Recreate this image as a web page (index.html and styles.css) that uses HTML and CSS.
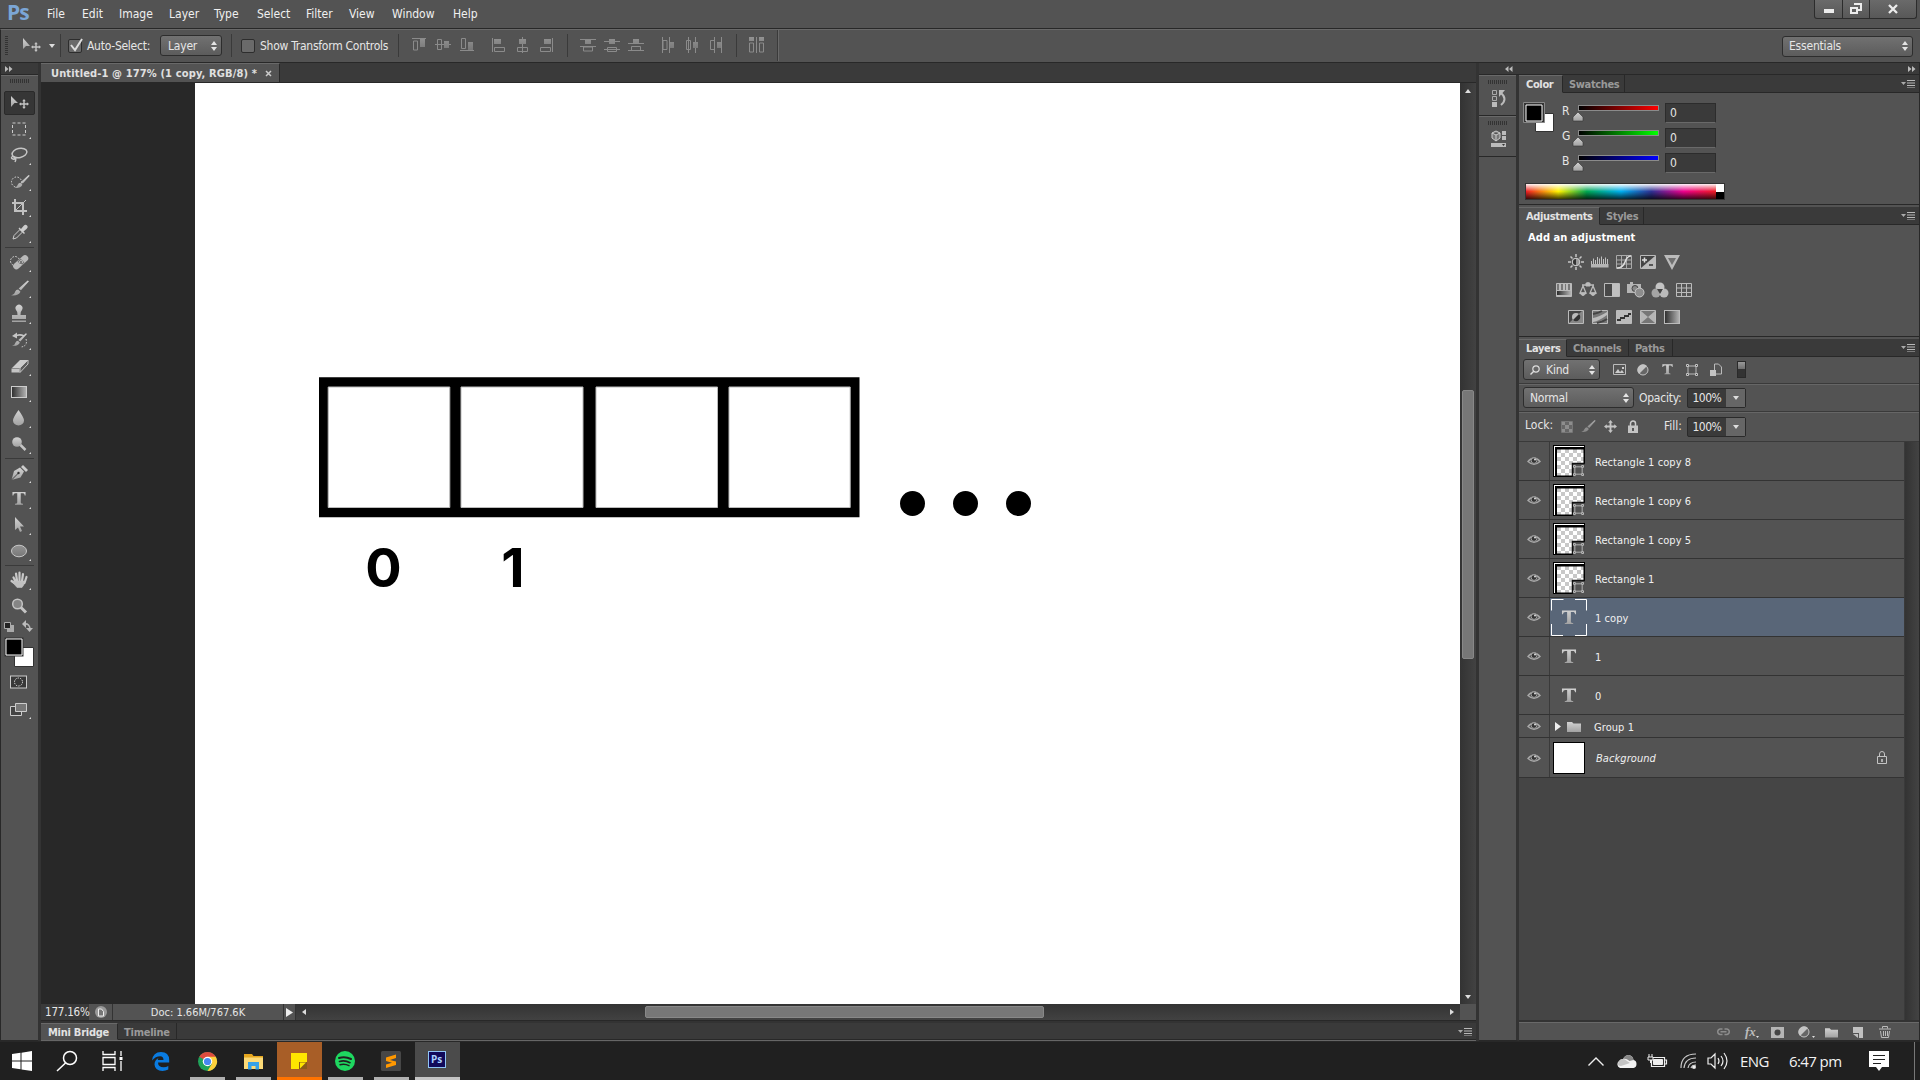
FILE: index.html
```html
<!DOCTYPE html>
<html lang="en">
<head>
<meta charset="utf-8">
<title>Photoshop</title>
<link rel="stylesheet" href="styles.css">
</head>
<body>
<svg class="defs" aria-hidden="true">
  <defs>
    <linearGradient id="metal" x1="0" y1="0" x2="0" y2="1"><stop offset="0" stop-color="#d2d2d2"/><stop offset="1" stop-color="#a2a2a2"/></linearGradient>
    <linearGradient id="fade" x1="0" x2="1"><stop offset="0" stop-color="#2c2c2c"/><stop offset="1" stop-color="#b5b5b5"/></linearGradient>
    <linearGradient id="dim" x1="0" y1="0" x2="0" y2="1"><stop offset="0" stop-color="#939393"/><stop offset="1" stop-color="#777"/></linearGradient>
    <pattern id="checker" width="8" height="8" patternUnits="userSpaceOnUse"><path fill="#fff" d="M0 0h8v8H0z"/><path fill="#c8c8c8" d="M0 0h4v4H0zM4 4h4v4H4z"/></pattern>
    <symbol id="eye" viewBox="0 0 14 12"><path d="M1 6.5Q7-.5 13 6.5Q7 12 1 6.5z" fill="none" stroke="#a8a8a8" stroke-width="1.4"/><circle cx="7" cy="5.6" r="2.8" fill="#333" stroke="#a0a0a0"/><circle cx="8" cy="4.6" r="1" fill="#ddd"/></symbol>
    <symbol id="updown" viewBox="0 0 6 10"><path d="M3 0L6 4H0zM3 10L6 6H0z" fill="#e4e4e4"/></symbol>
    <symbol id="panelmenu" viewBox="0 0 14 8"><path d="M0 2h5L2.500 5z" fill="#aaa"/><path d="M6 .5h8M6 3h8M6 5.500h8M6 8h8" stroke="#b8b8b8"/></symbol>
    <symbol id="shape" viewBox="0 0 12 12"><path d="M2 2h8v8H2z" fill="none" stroke="#bbb"/><path d="M.5.5h2v2h-2zM9.500.5h2v2h-2zM.5 9.500h2v2h-2zM9.500 9.500h2v2h-2z" fill="#444" stroke="#c4c4c4"/></symbol>
    <symbol id="thumb" viewBox="0 0 32 32"><path d="M0 0h32v32H0z" fill="#000"/><path d="M1 1h30v1H1zM1 1h1v30H1z" fill="#fff"/><rect x="4" y="4.500" width="26.500" height="26" fill="url(#checker)"/><path d="M19 18h13v14H19z" fill="#535353"/><path d="M32 18.500H19.500V32" fill="none" stroke="#111" stroke-width="1.500"/><svg x="20" y="20" width="11" height="11"><use href="#shape"/></svg></symbol>
    <symbol id="type" viewBox="0 0 16 16"><path d="M.5.500h15v4h-1c-.3-2-1-2.500-2.500-2.500h-2v10.500q0 1.300 2.500 1.500v1H3.500v-1Q6 13.800 6 12.500V2H4Q1.800 2 1.500 4.500h-1z" fill="url(#metal)"/></symbol>
    <symbol id="movex" viewBox="0 0 14 14"><path d="M7 0L9.500 3H8v3h3V4.500L14 7l-3 2.500V8H8v3h1.500L7 14l-2.500-3H6V8H3v1.500L0 7l3-2.500V6h3V3H4.500z" fill="#c4c4c4"/></symbol>
    <symbol id="brush" viewBox="0 0 20 18"><path d="M18.500 0L20 1l-9 10-2.500-2zM8 10l2.500 2.500Q8 17.500 0 16.500q4-1 4.500-4Q5.500 10 8 10z" fill="url(#metal)"/></symbol>
    <symbol id="folder" viewBox="0 0 14 11"><path d="M0 1h5l1.500 1.500H14V11H0z" fill="url(#metal)"/></symbol>
  </defs>
</svg>
<div class="screen">
  <header class="menubar">
    <div class="logo">Ps</div>
    <nav class="menu"><span class="w35">File</span><span class="w37">Edit</span><span class="w50">Image</span><span class="w45">Layer</span><span class="w43">Type</span><span class="w49">Select</span><span class="w43">Filter</span><span class="w43">View</span><span class="w61">Window</span><span>Help</span></nav>
    <div class="winbtns">
      <span class="winbtn wmin"><svg width="12" height="5"><path d="M1 0h10v4H1z" fill="#ececec"/></svg></span>
      <span class="winbtn wmax"><svg width="14" height="12"><path d="M5 1h7v6H8M2 5h6v5H2z" fill="none" stroke="#ececec" stroke-width="2"/></svg></span>
      <span class="winbtn wclose"><svg width="12" height="10"><path d="M2 1l8 8M10 1L2 9" stroke="#ececec" stroke-width="2.300"/></svg></span>
    </div>
  </header>
  <div class="options">
    <span class="grip-v"></span>
    <svg class="movetool" width="20" height="16"><path d="M1 0l7 8H4l-3 3z" fill="url(#metal)"/><svg x="9" y="4" width="10" height="10"><use href="#movex"/></svg></svg>
    <svg class="caret" width="6" height="4"><path d="M0 0h6L3 4z" fill="#ddd"/></svg>
    <span class="sep s1"></span>
    <span class="check c1"><svg width="15" height="16"><path d="M3 7l4 5L14 1" fill="none" stroke="#ddd" stroke-width="2"/></svg></span>
    <span class="label l1">Auto-Select:</span>
    <span class="select sel-layer">Layer<svg width="6" height="10"><use href="#updown"/></svg></span>
    <span class="sep s2"></span>
    <span class="check c2"></span>
    <span class="label l2">Show Transform Controls</span>
    <span class="sep s3"></span>
    <svg class="aligns" width="380" height="33" viewBox="400 29 380 33" fill="none" stroke="#8b8b8b">
      <path d="M412 38.500h14M413.500 41h4v9h-4zM437.500 39.500h4v10h-4zM435 44.500h16M460 50.500h14M461.500 38.500h4v10h-4z"/>
      <path d="M492.500 38v14M494.500 47.500h10v4h-10zM522.500 37v16M517.500 47.500h10v4h-10zM552.500 38v14M540.500 47.500h10v4h-10z"/>
      <path d="M580 39.500h16M580 46.500h16M583.500 47h9v4h-9zM604 41.500h16M604 49.500h16M607.500 47.500h9v4h-9zM628 43.500h16M628 50.500h16M631.500 46.500h9v4h-9z"/>
      <path d="M662.500 37v16M669.500 37v16M663 40.500h4v9h-4zM688.500 37v16M695.500 37v16M686.500 40.500h4v9h-4zM714.500 37v16M721.500 37v16M710.500 40.500h4v9h-4zM749.500 43h4v9h-4zM756.500 37v16M759.500 43h4v9h-4z"/>
      <path stroke="none" fill="url(#dim)" d="M420 39h5v8h-5zM444 41h5v7h-5zM468 42h5v8h-5zM494 39h7v5h-7zM519 39h7v5h-7zM544 39h7v5h-7zM585 40h6v4h-6zM609 39h6v5h-6zM633 39h6v4h-6zM670 42h4v6h-4zM693 42h5v6h-5zM717 42h4v6h-4zM749 37h5v4h-5zM759 37h5v4h-5z"/>
      <path stroke="#3a3a3a" d="M567.500 34v23M736.500 34v23M777.500 30v31"/><path stroke="#696969" d="M778.500 30v31"/>
    </svg>
    <span class="select workspace">Essentials<svg width="6" height="10"><use href="#updown"/></svg></span>
  </div>
  <main class="work">
    <aside class="tools">
      <div class="colhead"><svg width="8" height="6"><path d="M0 0l3.500 3L0 6zM4 0l3.500 3L4 6z" fill="#bbb"/></svg></div>
      <div class="toolbody">
        <span class="grip-h"></span>
        <div class="tool active"><svg viewBox="0 0 38 26"><path d="M10 6l7 7h-3.500L10 17z" fill="url(#metal)"/><svg x="18" y="9" width="10" height="10"><use href="#movex"/></svg></svg></div>
        <div class="tool more"><svg viewBox="0 0 38 26"><rect x="11.500" y="7" width="13" height="12" fill="none" stroke="#ccc" stroke-dasharray="3 2"/></svg></div>
        <div class="tool more"><svg viewBox="0 0 38 26" fill="none" stroke="#c5c5c5" stroke-width="1.500"><ellipse cx="18.500" cy="11" rx="7.500" ry="4.500" transform="rotate(-12 18.500 11)"/><path d="M12 14q-3 2 0 3t1-2q3 1 1 5"/></svg></div>
        <div class="tool more"><svg viewBox="0 0 38 26"><circle cx="15.500" cy="14" r="5" fill="none" stroke="#ddd" stroke-dasharray="1.500 1.500"/><svg x="13" y="7" width="16" height="14"><use href="#brush"/></svg></svg></div>
        <div class="tool more"><svg viewBox="0 0 38 26" fill="none" stroke="#c0c0c0" stroke-width="2"><path d="M14 5v12h12M11 9h11v12"/><path d="M14 17L25 6" stroke-width="1"/></svg></div>
        <div class="tool more"><svg viewBox="0 0 38 26"><path d="M12 19l1-3.500 6-6 2.500 2.500-6 6z" fill="#555" stroke="#ccc"/><path d="M17.500 8.500l1-1 1.500 1.500 2.500-3q2-2 3.500-.5t-.5 3.500l-3 2.500 1.500 1.500-1 1z" fill="#ccc"/></svg></div>
        <hr>
        <div class="tool more"><svg viewBox="0 0 38 26"><circle cx="14" cy="12" r="4.500" fill="none" stroke="#ddd" stroke-dasharray="1.500 1.500"/><rect x="10.500" y="10" width="18" height="6.500" rx="3.200" fill="#b9b9b9" transform="rotate(-42 19.500 13)"/><path d="M16.500 12.500l4 4 3-3-4-4z" fill="#777"/><path d="M18 13h1m2 0h1m-2-2v1m0 3v1" stroke="#eee"/></svg></div>
        <div class="tool more"><svg viewBox="0 0 38 26"><svg x="10" y="5" width="18" height="17"><use href="#brush"/></svg></svg></div>
        <div class="tool more"><svg viewBox="0 0 38 26"><path d="M15 9a3.500 3.500 0 1 1 6 0q-2 2-1.500 5H25v4H11v-4h5.500Q17 11 15 9zM11 19.500h14V21H11z" fill="url(#metal)"/></svg></div>
        <div class="tool more"><svg viewBox="0 0 38 26"><path d="M15 8q4-2 8 0v2q-4-2-8-.5z" fill="#c5c5c5"/><path d="M11 9l5-3.500v6z" fill="#c5c5c5"/><svg x="11" y="6" width="15" height="14"><use href="#brush"/></svg><path d="M25 12q2 7-5 8" fill="none" stroke="#ddd" stroke-dasharray="1.500 1.500"/></svg></div>
        <div class="tool more"><svg viewBox="0 0 38 26"><path d="M11 15l8-8h8l-8 8z" fill="#ccc"/><path d="M10.500 15.500h8v4h-8z" fill="#c4c4c4"/><path d="M19 15l8-8v4l-8 8.500z" fill="#5d5d5d" stroke="#c5c5c5"/></svg></div>
        <div class="tool more"><svg viewBox="0 0 38 26"><rect x="10.500" y="7.500" width="15" height="11" fill="url(#fade)" stroke="#ccc"/></svg></div>
        <div class="tool more"><svg viewBox="0 0 38 26"><path d="M17.500 5q5.500 7.500 5.500 10.500a5.500 5 0 0 1-11 0Q12 12.500 17.500 5z" fill="url(#metal)"/></svg></div>
        <div class="tool more"><svg viewBox="0 0 38 26"><circle cx="16" cy="11" r="4.800" fill="url(#metal)"/><path d="M19.500 14l5 5" stroke="#c4c4c4" stroke-width="2.500"/></svg></div>
        <hr>
        <div class="tool more"><svg viewBox="0 0 38 26"><path d="M10.500 20l2.500-9 6-3.500 4 4-3.500 6z" fill="url(#metal)"/><path d="M20 7l2-2 5 5-2 2z" fill="#ccc"/><path d="M10.500 20l7-7" stroke="#444"/><circle cx="17.500" cy="13" r="1.200" fill="#333"/></svg></div>
        <div class="tool more"><svg viewBox="0 0 38 26"><svg x="11" y="5" width="14" height="15"><use href="#type"/></svg></svg></div>
        <div class="tool more"><svg viewBox="0 0 38 26"><path d="M14 5v13l3-2.500 2 4.500 2-1-2-4.500h4z" fill="url(#metal)"/></svg></div>
        <div class="tool more"><svg viewBox="0 0 38 26"><ellipse cx="18" cy="13" rx="7.500" ry="5.800" fill="url(#dim)" stroke="#c8c8c8"/></svg></div>
        <hr>
        <div class="tool more"><svg viewBox="0 0 38 26" stroke="#c8c8c8" stroke-linecap="round"><path d="M12.500 10.500l3 6M15 6.500l1 7M18.500 5.500v8M22 7l-1 7M25.500 10l-2 6M10.500 14l3 2" stroke-width="2.200" fill="none"/><path d="M13 14h10.500q0 4-2.500 6.500h-5Q14 18 11 15z" fill="#c0c0c0" stroke-width=".5"/></svg></div>
        <div class="tool"><svg viewBox="0 0 38 26"><path d="M19.500 14l5.500 5.500" stroke="#c4c4c4" stroke-width="3"/><circle cx="16.500" cy="11" r="4.800" fill="#858585" stroke="#c4c4c4" stroke-width="1.500"/></svg></div>
        <svg class="minis" width="38" height="17"><path d="M6 6h7v7H6z" fill="#aaa"/><path d="M3.500 3.500h6v6h-6z" fill="#222" stroke="#aaa"/><path d="M23 5q6-1 6 6" fill="none" stroke="#b5b5b5" stroke-width="1.500"/><path d="M21 5l4-4v8zM25 9h7l-3.500 4z" fill="#bbb"/></svg>
        <svg class="fgbg" width="38" height="32"><path d="M13.500 11.500h19v19h-19z" fill="#fff" stroke="#333"/><path d="M3.500 1.500h19v19h-19z" fill="#333"/><path d="M5 3h16v16H5z" stroke="#fff"/></svg>
        <div class="tool"><svg viewBox="0 0 38 26"><rect x="9.500" y="8" width="16" height="12" fill="#383838" stroke="#ccc"/><circle cx="17.500" cy="14" r="4" fill="none" stroke="#eee" stroke-dasharray="1.300 1.200"/></svg></div>
        <div class="tool more screenmode"><svg viewBox="0 0 38 26"><path d="M9.500 10.500h11v9h-11z" fill="#444" stroke="#ccc"/><path d="M14.500 7.500h11v8h-11z" fill="#777" stroke="#ccc"/></svg></div>
      </div>
    </aside>
    <section class="document">
      <div class="doctabs"><div class="doctab"><span class="docname">Untitled-1 @ 177% (1 copy, RGB/8) *</span><svg width="7" height="7"><path d="M1 1l5 5M6 1L1 6" stroke="#ccc" stroke-width="1.500"/></svg></div></div>
      <div class="view">
        <div class="pasteboard"></div>
        <div class="canvas">
          <svg class="cells" width="560" height="160" viewBox="310 367 560 160">
            <path d="M319 377.300h540.500v140H319z"/>
            <path d="M328.200 387h121.600v120.500H328.200zM461 387h122v120.500H461zM596 387h121.500v120.500H596zM729 387h121.200v120.500H729z" fill="#fff" stroke="#bbb"/>
          </svg>
          <span class="dot d1"></span><span class="dot d2"></span><span class="dot d3"></span>
          <span class="num n0">0</span><span class="num n1">1</span>
        </div>
        <div class="vscroll"><svg width="6" height="4"><path d="M0 4h6L3 0z" fill="#ddd"/></svg><span class="vthumb"></span><svg width="6" height="4"><path d="M0 0h6L3 4z" fill="#ddd"/></svg></div>
      </div>
      <div class="status">
        <span class="zoomval">177.16%</span>
        <span class="share"><svg width="12" height="12"><circle cx="6" cy="6" r="6" fill="#999"/><path d="M3.500 3h3l2 2.500V10h-5z" fill="#777" stroke="#eee"/></svg></span>
        <span class="docsize">Doc: 1.66M/767.6K</span>
        <span class="play"><svg width="7" height="9"><path d="M0 0l7 4.500L0 9z" fill="#eee"/></svg></span>
        <div class="hscroll"><svg width="4" height="6"><path d="M4 0v6L0 3z" fill="#ddd"/></svg><span class="hthumb"></span><svg width="4" height="6"><path d="M0 0v6l4-3z" fill="#ddd"/></svg></div>
        <span class="corner"></span>
      </div>
      <div class="tabrow bridge"><span class="tab on t77">Mini Bridge</span><span class="tab t59">Timeline</span><span class="rest"><svg width="14" height="8"><use href="#panelmenu"/></svg></span></div>
    </section>
    <section class="right">
      <div class="righthead"><svg class="rh1" width="8" height="6"><path d="M3.500 0v6L0 3zM7.500 0v6L4 3z" fill="#bbb"/></svg><svg width="8" height="6"><path d="M0 0l3.500 3L0 6zM4 0l3.500 3L4 6z" fill="#bbb"/></svg></div>
      <div class="rightcols">
        <div class="dock">
          <div class="dockitem"><span class="grip-h"></span><svg width="16" height="18"><path d="M1.500 1.500h4v4h-4zM1.500 7.500h4v4h-4z" fill="none" stroke="#aaa"/><path d="M1 13h5v5H1zM8 1h6L8 8z" fill="#bbb"/><path d="M10 4q7 6 0 12" fill="none" stroke="#bbb" stroke-width="2"/></svg></div>
          <div class="dockitem"><span class="grip-h"></span><svg width="16" height="18"><path d="M5 1l4 2v5l-4 3-4-3V3zM1 3l4 2 4-2M5 5v6" fill="#777" stroke="#ccc"/><path d="M11 1h4v4h-4zM11 6h4v4h-4zM0 13h15v4H0z" fill="#bbb"/><path d="M11 14h3l-1.500 2z" fill="#333"/></svg></div>
        </div>
        <div class="panels">
          <div class="panel color">
            <div class="tabrow"><span class="tab on t44">Color</span><span class="tab t62">Swatches</span><span class="rest"><svg width="14" height="8"><use href="#panelmenu"/></svg></span></div>
            <div class="rgb">
              <svg class="swatch" width="32" height="32"><path d="M12.500 11.500h18v18h-18z" fill="#fff" stroke="#333"/><path d="M.5.500h21v20H.5z" fill="#333" stroke="#888"/><path d="M3 3h16v16H3z" stroke="#fff"/></svg>
              <div class="channels">
                <div class="channel"><span class="cname">R</span><span class="track red"><svg class="knob" width="12" height="9"><path d="M6 0l5 5v4H1V5z" fill="url(#metal)" stroke="#333" stroke-width=".6"/></svg></span><span class="field">0</span></div>
                <div class="channel"><span class="cname">G</span><span class="track green"><svg class="knob" width="12" height="9"><path d="M6 0l5 5v4H1V5z" fill="url(#metal)" stroke="#333" stroke-width=".6"/></svg></span><span class="field">0</span></div>
                <div class="channel"><span class="cname">B</span><span class="track blue"><svg class="knob" width="12" height="9"><path d="M6 0l5 5v4H1V5z" fill="url(#metal)" stroke="#333" stroke-width=".6"/></svg></span><span class="field">0</span></div>
              </div>
            </div>
            <div class="spectrum"><span class="hues"></span><span class="bw"></span></div>
          </div>
          <div class="panel adjust">
            <div class="tabrow"><span class="tab on t81">Adjustments</span><span class="tab t44">Styles</span><span class="rest"><svg width="14" height="8"><use href="#panelmenu"/></svg></span></div>
            <div class="adjtitle">Add an adjustment</div>
            <div class="icons r1">
              <svg viewBox="0 0 18 16"><circle cx="9" cy="8" r="3.800" fill="#999" stroke="#ccc"/><path d="M9 5v6a3 3 0 0 1 0-6" fill="#333"/><path d="M9 0v3M9 13v3M1 8h3M14 8h3M3.500 2.500l2 2M12.500 11.500l2 2M3.500 13.500l2-2M12.500 4.500l2-2" stroke="#c8c8c8" stroke-width="1.500"/></svg>
              <svg viewBox="0 0 18 16"><path d="M.5 7v5.500M2.500 4.500V11M4.500 6v5M6.500 3v8M8.500 4.500V11M10.500 2.500V11M12.500 5v6M14.500 3.500V11M16.500 5v7" stroke="#c0c0c0" fill="none"/><path d="M0 10h17.500v3.500H0z" fill="#b5b5b5"/></svg>
              <svg viewBox="0 0 18 16"><path d="M1.500 1.500h15v13h-15zM6.500 2v12M11.500 2v12M2 6h14M2 10h14" fill="none" stroke="#aaa"/><path d="M2 14q6 0 8-6t6-6" fill="none" stroke="#e0e0e0" stroke-width="1.500"/></svg>
              <svg viewBox="0 0 18 16"><path d="M1.500 1.500h15v13h-15z" fill="#444" stroke="#bbb"/><path d="M2 14L16 2v12z" fill="#bbb"/><path d="M3 6h5M5.500 3.500v5" stroke="#ddd" stroke-width="1.500"/><path d="M10 11h4" stroke="#333" stroke-width="1.500"/></svg>
              <svg viewBox="0 0 18 16"><path d="M1 1h16L9 16z" fill="#bbb"/><path d="M5 4h8l-4 7z" fill="#707070"/></svg>
            </div>
            <div class="icons r2">
              <svg viewBox="0 0 18 16"><path d="M1.500 1.500h15v13h-15z" fill="#bbb" stroke="#bbb"/><path d="M2 2h2v6H2zM6 2h2v6H6zM10 2h1v6h-1zM13 2h2v6h-2z" fill="#777"/><rect x="2" y="9" width="14" height="4" fill="url(#fade)"/></svg>
              <svg viewBox="0 0 18 16" fill="none" stroke="#bbb"><path d="M3 3h12M9 0v4M4 4l-3 7h6zM14 4l-3 7h6z" stroke-width="1.300"/><path d="M1 11q3 5 6 0zM11 11q3 5 6 0zM7 1h4v3H7z" fill="#bbb"/></svg>
              <svg viewBox="0 0 18 16"><path d="M1.500 1.500h15v13h-15z" fill="#484848" stroke="#bbb"/><path d="M9 2h7v12H9z" fill="#c0c0c0"/></svg>
              <svg viewBox="0 0 18 16"><path d="M0 2h3V0h3v2h8v9H0z" fill="#b5b5b5"/><circle cx="8" cy="6.500" r="3" fill="#888" stroke="#444"/><circle cx="12.500" cy="10.500" r="4.500" fill="#8d8d8d" stroke="#ccc"/></svg>
              <svg viewBox="0 0 18 16"><circle cx="9" cy="5" r="4.500" fill="#c4c4c4"/><circle cx="5" cy="11" r="4.500" fill="#a5a5a5"/><circle cx="13" cy="11" r="4.500" fill="#ccc" fill-opacity=".85"/><path d="M6 7h6l-3 5z" fill="#444"/></svg>
              <svg viewBox="0 0 18 16"><path d="M1.500 1.500h15v13h-15z" fill="#555" stroke="#bbb"/><path d="M6.500 2v12M11.500 2v12M2 6h14M2 10.500h14" stroke="#bbb"/></svg>
            </div>
            <div class="icons r3">
              <svg viewBox="0 0 18 16"><path d="M1.500 1.500h15v13h-15z" fill="#444" stroke="#bbb"/><path d="M2 14L15 2h1v12z" fill="#888"/><circle cx="9" cy="8" r="4" fill="#bbb"/><path d="M6 11l6-6A4 4 0 0 1 6 11z" fill="#333"/></svg>
              <svg viewBox="0 0 18 16"><path d="M1.500 1.500h15v13h-15z" fill="#777" stroke="#bbb"/><path d="M2 9q6-1 14-6v3q-8 6-14 7z" fill="#bbb"/><path d="M2 5q6-1 9-3M6 14q6-1 10-4" stroke="#444" stroke-width="2"/></svg>
              <svg viewBox="0 0 18 16"><path d="M1.500 1.500h15v13h-15z" fill="#bbb" stroke="#bbb"/><path d="M2 10h3V8h4V6h4V4h3v2h-2v2h-4v2H6v2H2z" fill="#333"/></svg>
              <svg viewBox="0 0 18 16"><path d="M1.500 1.500h15v13h-15z" fill="#767676" stroke="#bbb"/><path d="M2 2l7 6-7 6zM16 2L9 8l7 6z" fill="#b5b5b5"/></svg>
              <svg viewBox="0 0 18 16"><rect x="1.500" y="1.500" width="15" height="13" fill="url(#fade)" stroke="#bbb"/></svg>
            </div>
          </div>
          <div class="panel layers">
            <div class="tabrow"><span class="tab on t48">Layers</span><span class="tab t62">Channels</span><span class="tab t44">Paths</span><span class="rest"><svg width="14" height="8"><use href="#panelmenu"/></svg></span></div>
            <div class="lrow filter">
              <span class="select kind"><svg width="10" height="10"><circle cx="6" cy="4" r="3.200" fill="none" stroke="#ddd" stroke-width="1.200"/><path d="M4 6L.5 9.500" stroke="#ddd" stroke-width="1.500"/></svg><span class="grow">Kind</span><svg width="6" height="10"><use href="#updown"/></svg></span>
              <svg class="f1" width="13" height="12"><path d="M.5.500h12v10H.5z" fill="#555" stroke="#bbb"/><path d="M2 9l3-4 2 3 2-2 2 3z" fill="#ccc"/><path d="M9 3h2v2H9z" fill="#ccc"/></svg>
              <svg class="f2" width="12" height="12"><circle cx="6" cy="6" r="5" fill="#666" stroke="#c4c4c4"/><path d="M2 10L10 2A5 5 0 0 0 2 10z" fill="#c4c4c4"/></svg>
              <svg class="f3" width="11" height="11"><use href="#type"/></svg>
              <svg class="f4" width="12" height="12"><use href="#shape"/></svg>
              <svg class="f5" width="12" height="13"><path d="M4.500 1h4l3 3v7h-7z" fill="#555" stroke="#bbb"/><path d="M0 7h6v6H0z" fill="#c4c4c4"/></svg>
              <span class="toggle"></span>
            </div>
            <div class="lrow blend"><span class="select mode">Normal<svg width="6" height="10"><use href="#updown"/></svg></span><span class="optext">Opacity:</span><span class="pct"><span class="pv">100%</span><span class="pd"><svg width="6" height="4"><path d="M0 0h6L3 4z" fill="#ddd"/></svg></span></span></div>
            <div class="lrow lock"><span class="locktext">Lock:</span>
              <svg class="k1" width="12" height="13"><path d="M.5 1.500h11v11H.5z" fill="#666" stroke="#777"/><path d="M1 2h3v3H1zM8 2h3v3H8zM4 5h4v4H4zM1 9h3v3H1zM8 9h3v3H8z" fill="#8d8d8d"/></svg>
              <svg class="k2" width="15" height="13" opacity=".65"><use href="#brush"/></svg>
              <svg class="k3" width="13" height="13"><use href="#movex"/></svg>
              <svg class="k4" width="10" height="13"><path d="M2.500 6V3.500a2.500 2.500 0 0 1 5 0V6" fill="none" stroke="#ccc" stroke-width="1.500"/><path d="M0 5.500h10V13H0z" fill="#c4c4c4"/><path d="M5 8v3" stroke="#333" stroke-width="1.500"/></svg>
              <span class="filltext">Fill:</span><span class="pct"><span class="pv">100%</span><span class="pd"><svg width="6" height="4"><path d="M0 0h6L3 4z" fill="#ddd"/></svg></span></span></div>
            <div class="listwrap">
              <div class="list">
                <div class="layer"><span class="vis"><svg width="14" height="12"><use href="#eye"/></svg></span><span class="body"><svg class="th" width="32" height="32"><use href="#thumb"/></svg><span class="lname">Rectangle 1 copy 8</span></span></div>
                <div class="layer"><span class="vis"><svg width="14" height="12"><use href="#eye"/></svg></span><span class="body"><svg class="th" width="32" height="32"><use href="#thumb"/></svg><span class="lname">Rectangle 1 copy 6</span></span></div>
                <div class="layer"><span class="vis"><svg width="14" height="12"><use href="#eye"/></svg></span><span class="body"><svg class="th" width="32" height="32"><use href="#thumb"/></svg><span class="lname">Rectangle 1 copy 5</span></span></div>
                <div class="layer"><span class="vis"><svg width="14" height="12"><use href="#eye"/></svg></span><span class="body"><svg class="th" width="32" height="32"><use href="#thumb"/></svg><span class="lname">Rectangle 1</span></span></div>
                <div class="layer"><span class="vis"><svg width="14" height="12"><use href="#eye"/></svg></span><span class="body selected"><svg class="tt" width="36" height="37"><path d="M.5 11.500V.500h12M24 .5h11.500v11M35.500 25v11.500H24M12 36.500H.5V25" fill="none" stroke="#fff"/><svg x="10" y="11" width="16" height="15"><use href="#type"/></svg></svg><span class="lname">1 copy</span></span></div>
                <div class="layer"><span class="vis"><svg width="14" height="12"><use href="#eye"/></svg></span><span class="body"><svg class="tt" width="36" height="37"><svg x="10" y="11" width="16" height="15"><use href="#type"/></svg></svg><span class="lname">1</span></span></div>
                <div class="layer"><span class="vis"><svg width="14" height="12"><use href="#eye"/></svg></span><span class="body"><svg class="tt" width="36" height="37"><svg x="10" y="11" width="16" height="15"><use href="#type"/></svg></svg><span class="lname">0</span></span></div>
                <div class="layer group"><span class="vis"><svg width="14" height="12"><use href="#eye"/></svg></span><span class="body"><svg class="tri" width="7" height="9"><path d="M0 0l6 4.500L0 9z" fill="#eee"/></svg><svg class="fold" width="14" height="11"><use href="#folder"/></svg><span class="lname">Group 1</span></span></div>
                <div class="layer back"><span class="vis"><svg width="14" height="12"><use href="#eye"/></svg></span><span class="body"><span class="white"></span><i class="lname">Background</i><svg class="lk" width="10" height="13"><path d="M2.500 6V3a2.500 2.500 0 0 1 5 0v3M.500 5.500h9v7h-9z" fill="none" stroke="#c4c4c4"/><path d="M5 8v3" stroke="#ccc" stroke-width="1.500"/></svg></span></div>
              </div>
              <div class="lscroll"></div>
            </div>
            <div class="lfoot">
              <svg width="15" height="12" fill="none" stroke="#8d8d8d" stroke-width="1.500"><path d="M6.500 8.500H4a2.800 2.800 0 0 1 0-5.500h2.500M8.500 3H11a2.800 2.800 0 0 1 0 5.500H8.500M4.500 5.800h6"/></svg>
              <span class="fx">fx<svg width="3" height="3"><path d="M0 0h3L1.500 2z" fill="#ddd"/></svg></span>
              <svg class="g1" width="13" height="11"><path d="M0 0h13v11H0z" fill="#b5b5b5"/><circle cx="6.500" cy="5.500" r="3" fill="#444"/></svg>
              <svg class="g2" width="17" height="12"><circle cx="6" cy="6" r="5" fill="#666" stroke="#c4c4c4"/><path d="M2 10L10 2A5 5 0 0 0 2 10z" fill="#c4c4c4"/><path d="M14 10h3l-1.500 2z" fill="#ddd"/></svg>
              <svg class="g3" width="13" height="11"><use href="#folder"/></svg>
              <svg class="g4" width="11" height="11"><path d="M0 0h10v11H6V6H0zM0 7h5v4z" fill="#c0c0c0"/></svg>
              <svg class="g5" width="12" height="12" fill="none" stroke="#bbb"><path d="M0 3h12M3.500 2.500V.5h5v2M1.500 5l1 6.500h7l1-6.500M4.500 5v5M6.500 5v5M8.500 5v5"/></svg>
            </div>
          </div>
        </div>
      </div>
    </section>
  </main>
  <footer class="taskbar">
    <div class="tb start"><svg width="20" height="20"><path d="M0 3l8.500-1.200V9.500H0zM9.500 1.700L20 0v9.500H9.500zM0 10.500h8.500v7.700L0 17zM9.500 10.500H20V20l-10.500-1.600z" fill="#fff"/></svg></div>
    <div class="tb search"><svg width="22" height="22" fill="none" stroke="#fff" stroke-width="1.500"><circle cx="14" cy="8" r="6.500"/><path d="M9.500 13L1 21"/></svg></div>
    <div class="tb tview"><svg width="21" height="20" fill="none" stroke="#fff" stroke-width="1.300"><path d="M1 0v3.500h12V0M1 6.500h12v7H1zM1 20v-3.500h12V20M19 0v5M19 10v10"/><path d="M17.500 6h3v3h-3z" fill="#fff" stroke="none"/></svg></div>
    <div class="tb"><svg width="18" height="19" viewBox="0 0 18 19"><path d="M0 8.500Q1 0 9 0q8 0 8.200 8v2.500H6q.2 4.800 5.500 4.800 2.800 0 4.800-1.200v3.500Q13.500 19 10.500 19 3 18.800 2.500 12.500 2.500 8 6.500 6 5.800 7 5.800 8h5.700q0-3.800-3.300-3.800Q3.500 4.200 0 8.500z" fill="#0a7be0"/></svg></div>
    <div class="tb run"><svg width="19" height="19" viewBox="0 0 20 20"><circle cx="10" cy="10" r="10" fill="#1fa35a"/><path d="M10 10L1.300 5A10 10 0 0 1 18.700 5z" fill="#dd4b3e"/><path d="M10 5h8.700A10 10 0 0 1 10 20l4.500-7.500z" fill="#fdd03b"/><circle cx="10" cy="10" r="5" fill="#fff"/><circle cx="10" cy="10" r="3.800" fill="#4688f1"/></svg></div>
    <div class="tb run"><svg width="19" height="17"><path d="M0 1h8l1.500 2H19v13H0z" fill="#e6a71f"/><path d="M0 4.500h19V16H0z" fill="#fcda77"/><path d="M4 9h11v7.500h-3.500V13h-4v3.500H4z" fill="#35a1e8"/></svg></div>
    <div class="tb run sticky"><svg width="16" height="16"><path d="M0 0h16v9l-7 7H0z" fill="#ffe600"/><path d="M8 9h8v7H8z" fill="#8b5a1a"/><path d="M9 9.500h6l-6 6z" fill="#ffe600"/></svg></div>
    <div class="tb run"><svg width="20" height="20" fill="none" stroke="#202020" stroke-linecap="round"><circle cx="10" cy="10" r="10" fill="#1ed760" stroke="none"/><path d="M4 7q6-2 12 1" stroke-width="2"/><path d="M4.500 10.500q5.500-1.500 10.500 1.200" stroke-width="1.700"/><path d="M5 13.700q5-1.200 9 1" stroke-width="1.400"/></svg></div>
    <div class="tb run sub"><svg width="20" height="20"><rect width="20" height="20" rx="1.500" fill="#474747"/><path d="M5 6.500l10-3v3.500l-6 2 6 1.500v3.500l-10 3v-3.500l6-1.800-6-1.700z" fill="#ff9800"/></svg></div>
    <div class="tb run ps"><span class="pslogo">Ps</span></div>
    <div class="tray">
      <svg class="y1" width="16" height="9"><path d="M.5 8.500L8 1l7.500 7.500" fill="none" stroke="#eee" stroke-width="1.400"/></svg>
      <svg class="y2" width="21" height="13"><path d="M4 13a4 4 0 0 1-1-7q1-2 4-2Q9 0 13 0q4 1 4.500 5 3 .5 3 4t-3 4z" fill="#f2f2f2"/><path d="M7 4Q9 0 13 0q4 1 4.500 5l-4 1Q10 3 7 4z" fill="#888"/><path d="M3 6q4-4 8 0l3 2-9 3q-5 0-2-5z" fill="#c4c4c4"/></svg>
      <svg class="y3" width="20" height="15" fill="none" stroke="#eee"><path d="M4.500 3.500h13v9h-13zM18 6h1.500v4H18" stroke-width="1.200"/><path d="M6.500 5.500h9v5h-9z" fill="#eee"/><path d="M1 3h5v3H1zM2 0v3M5 0v3M3.500 6v3" fill="#222"/></svg>
      <svg class="y4" width="17" height="16" fill="none" stroke="#ccc" stroke-width="1.200"><path d="M1 15Q1 1 16 1M4 15Q5 5 16 5M8 15q1-6 8-6M11 15q1-3 5-3"/><circle cx="14" cy="14" r="1.500" fill="#fff"/></svg>
      <svg class="y5" width="21" height="18" fill="none" stroke="#eee" stroke-width="1.200"><path d="M1 6h3l4-4v14l-4-4H1zM11 6q2 3 0 6M14 4q4 5 0 10M17 1q6 8 0 16"/></svg>
      <span class="lang">ENG</span><span class="clock">6:47 pm</span>
      <svg class="y6" width="20" height="20"><path d="M0 0h20v16h-7l-3 4-3-4H0z" fill="#fff"/><path d="M4 4.500h12M4 8.500h12M4 12.500h8" stroke="#222"/></svg>
      <span class="desk"></span>
    </div>
  </footer>
</div>
</body>
</html>
```
FILE: styles.css
```css
* { box-sizing: border-box; }
body { margin: 0; background: #535353; color: #e6e6e6; font: 11px "DejaVu Sans Condensed", "DejaVu Sans", sans-serif; font-stretch: condensed; overflow: hidden; }
svg { display: block; flex: none; overflow: visible; }
.defs { width: 0; height: 0; position: absolute; }
.screen { width: 1920px; height: 1080px; display: flex; flex-direction: column; background: #535353; }
span { white-space: nowrap; }

/* menu bar */
.menubar { height: 29px; flex: none; display: flex; border-bottom: 1px solid #282828; }
.logo { width: 47px; padding-left: 7px; font: bold 21px/25px "Open Sans", sans-serif; color: #7ba6d6; letter-spacing: -1px; }
.menu { display: flex; font-size: 12px; line-height: 28px; flex: 1; color: #f0f0f0; }
.w35 { width: 35px; } .w37 { width: 37px; } .w50 { width: 50px; } .w45 { width: 45px; } .w43 { width: 43px; } .w49 { width: 49px; } .w61 { width: 61px; }
.winbtns { display: flex; height: 19px; margin-right: 3px; border: 1px solid #2c2c2c; border-top: 0; border-radius: 0 0 3px 3px; background: linear-gradient(#6a6a6a, #585858); }
.winbtn { display: flex; justify-content: center; align-items: center; }
.winbtn + .winbtn { border-left: 1px solid #2c2c2c; }
.wmin { width: 27px; padding-top: 5px; } .wmax { width: 27px; } .wclose { width: 47px; }

/* options bar */
.options { height: 34px; flex: none; display: flex; align-items: center; border-top: 1px solid #696969; border-bottom: 1px solid #282828; border-left: 1px solid #282828; font-size: 12px; padding-bottom: 1px; }
.grip-v { width: 3px; height: 20px; margin-left: 4px; background: repeating-linear-gradient(#333 0 1px, transparent 1px 2px); }
.movetool { margin-left: 14px; }
.caret { margin-left: 7px; }
.sep { width: 1px; height: 23px; background: #3a3a3a; flex: none; }
.s1 { margin-left: 5px; }
.check { width: 14px; height: 14px; border: 1px solid #2d2d2d; border-radius: 2px; background: #6a6a6a; flex: none; }
.check svg { margin: -2px 0 0 -1px; }
.c1 { margin-left: 7px; } .c2 { margin-left: 9px; }
.label { letter-spacing: -.26px; }
.l1 { width: 78px; padding-left: 5px; } .l2 { width: 143px; padding-left: 5px; }
.select { display: flex; align-items: center; justify-content: space-between; height: 21px; padding: 0 4px 0 7px; border: 1px solid #2d2d2d; border-radius: 3px; background: linear-gradient(#717171, #5c5c5c); flex: none; letter-spacing: -.2px; }
.sel-layer { width: 62px; } .s2 { margin-left: 9px; } .s3 { margin-left: 0; }
.aligns { margin-left: 1px; }
.workspace { width: 131px; margin: 1px 7px 0 auto; padding-left: 6px; }

.work { flex: 1; min-height: 0; display: flex; }

/* tool column */
.tools { width: 41px; flex: none; display: flex; flex-direction: column; border-left: 1px solid #282828; border-right: 3px solid #333; }
.colhead { height: 12px; background: #3a3a3a; padding: 3px 4px; border-bottom: 1px solid #282828; }
.toolbody { flex: 1; border-top: 1px solid #696969; border-bottom: 1px solid #282828; display: flex; flex-direction: column; }
.grip-h { display: block; width: 20px; height: 4px; margin: 3px 0 8px 9px; flex: none; background: repeating-linear-gradient(90deg, #333 0 1px, transparent 1px 2px); }
.toolbody .grip-h { margin-bottom: 7px; }
.tool { height: 26px; width: 37px; flex: none; position: relative; }
.tool > svg { width: 38px; height: 26px; }
.active { height: 24px; margin: 1px 3px; width: 31px; background: #363636; border: 1px solid #2a2a2a; border-radius: 2px; }
.active > svg { margin: -2px 0 0 -4px; }
.more::after { content: ""; position: absolute; right: 7px; bottom: 3px; border: 1.500px solid #ddd; border-left-color: transparent; border-top-color: transparent; }
.tools hr { width: 29px; height: 1px; border: 0; background: #3a3a3a; margin: 1px 0 1px 4px; flex: none; }
.screenmode { margin-top: 2px; }

/* document */
.document { width: 1438px; flex: none; display: flex; flex-direction: column; border-right: 3px solid #333; }
.doctabs { height: 20px; flex: none; display: flex; background: #3a3a3a; border-bottom: 1px solid #282828; }
.doctab { width: 239px; display: flex; align-items: center; padding: 0 7px 0 10px; justify-content: space-between; background: #535353; border-top: 1px solid #696969; border-right: 1px solid #282828; color: #e0e0e0; font-weight: bold; }
.docname { letter-spacing: .14px; padding-top: 1px; }
.view { flex: 1; display: flex; min-height: 0; }
.pasteboard { width: 154px; background: #282828; }
.canvas { width: 1265px; background: #fff; position: relative; }
.cells { position: absolute; left: 115px; top: 284px; }
.dot { position: absolute; top: 407.500px; width: 25px; height: 25px; border-radius: 50%; background: #000; }
.d1 { left: 705px; } .d2 { left: 758px; } .d3 { left: 811px; }
.num { position: absolute; top: 452.500px; width: 60px; text-align: center; color: #000; font: bold 54px/64px Inter, sans-serif; }
.n0 { left: 158.500px; } .n1 { left: 288px; }
.vscroll { width: 16px; display: flex; flex-direction: column; align-items: center; padding: 6px 0 5px; background: linear-gradient(90deg, #333, #424242); }
.vthumb { width: 12px; height: 269px; margin: 297px 0 auto; border-radius: 2px; background: #777; border: 1px solid #888; }
.status { height: 17px; flex: none; display: flex; line-height: 17px; background: #535353; border-bottom: 1px solid #282828; }
.zoomval { width: 48px; padding-left: 4px; background: #3a3a3a; font-size: 11.500px; letter-spacing: -.2px; }
.share { width: 24px; padding: 2px 0 0 6px; border-right: 1px solid #333; }
.docsize { width: 171px; text-align: center; border-right: 1px solid #333; }
.play { width: 11px; padding: 4px 0 0 2px; }
.hscroll { flex: 1; display: flex; align-items: center; background: linear-gradient(#333, #424242); padding: 0 6px; border-left: 1px solid #333; }
.hthumb { width: 399px; height: 12px; margin: 0 auto 0 339px; border-radius: 2px; background: #777; border: 1px solid #888; }
.corner { width: 16px; }

/* tab strips */
.tabrow { display: flex; height: 18px; flex: none; background: #3a3a3a; font-weight: bold; line-height: 18px; letter-spacing: -.35px; }
.tab { border-right: 1px solid #282828; border-bottom: 1px solid #282828; color: #999; padding: 1px 0 0 6px; flex: none; line-height: 17px; }
.tab.on { background: #535353; color: #e2e2e2; border-bottom-color: #535353; border-top: 1px solid #696969; padding: 0 0 0 7px; }
.rest { flex: 1; display: flex; justify-content: flex-end; padding: 5px 4px; border-bottom: 1px solid #282828; }
.t77 { width: 77px; } .t59 { width: 59px; } .t44 { width: 44px; } .t62 { width: 62px; } .t81 { width: 81px; } .t48 { width: 48px; }
.bridge { height: 20px; border-top: 2px solid #333; border-bottom: 1px solid #666; letter-spacing: -.25px; }

/* right side */
.right { flex: 1; display: flex; flex-direction: column; border-right: 1px solid #282828; min-width: 0; }
.righthead { height: 12px; flex: none; display: flex; justify-content: space-between; padding: 3px 3px 0 26px; background: #3a3a3a; border-bottom: 1px solid #282828; }
.rightcols { flex: 1; display: flex; min-height: 0; }
.dock { width: 40px; flex: none; border-right: 3px solid #333; border-bottom: 1px solid #282828; }
.dockitem { height: 41px; border-top: 1px solid #696969; border-bottom: 1px solid #282828; padding-top: 1px; }
.dockitem svg { margin: -3px 0 0 12px; }
.panels { flex: 1; display: flex; flex-direction: column; min-width: 0; }
.panel { border-bottom: 1px solid #282828; flex: none; }
.color { height: 130px; }
.rgb { display: flex; padding-left: 4px; height: 90px; }
.swatch { margin-top: 9px; }
.channels { padding: 10px 0 0 7px; }
.channel { display: flex; height: 25px; font-size: 12px; align-items: flex-start; }
.cname { width: 16px; line-height: 17px; }
.track { width: 81px; height: 6px; border: 1px solid #8b8b8b; margin-top: 2px; position: relative; }
.knob { position: absolute; left: -7px; top: 6px; }
.red { background: linear-gradient(90deg, #000, #f00); }
.green { background: linear-gradient(90deg, #000, #0f0); }
.blue { background: linear-gradient(90deg, #000, #00f); }
.field { width: 51px; height: 20px; margin-left: 6px; padding-left: 4px; line-height: 19px; background: #3a3a3a; border: 1px solid #2c2c2c; border-bottom-color: #696969; }
.spectrum { width: 200px; height: 17px; margin: 0 0 0 6px; display: flex; border: 1px solid #333; }
.hues { flex: 1; background: linear-gradient(rgba(255,255,255,.95), rgba(255,255,255,0) 50%, rgba(0,0,0,0) 50%, rgba(0,0,0,.75)), linear-gradient(90deg, #ed1c24, #fff200 17%, #00a651 32%, #00aeef 50%, #2e3192 66%, #ec008c 83%, #ed1c24); }
.bw { width: 8px; background: linear-gradient(#fff 50%, #000 50%); }
.adjust { margin-top: 2px; height: 130px; }
.adjtitle { padding: 5px 0 0 9px; font-weight: bold; line-height: 16px; font-size: 11px; color: #fff; letter-spacing: .08px; }
.icons { display: flex; gap: 6px; }
.icons svg { width: 18px; height: 16px; }
.r1 { padding: 8px 0 0 47.500px; } .r2 { padding: 12px 0 0 36px; } .r3 { padding: 11px 0 0 48px; }
.layers { margin-top: 2px; flex: 1; display: flex; flex-direction: column; min-height: 0; }
.lrow { display: flex; align-items: center; height: 28px; flex: none; border-bottom: 1px solid #3a3a3a; border-top: 1px solid #666; font-size: 12px; padding-bottom: 1px; }
.lrow.filter { height: 27px; border-top: 0; }
.lrow.lock { height: 30px; }
.kind { width: 77px; margin-left: 4px; gap: 6px; padding-left: 6px; font-size: 12px; }
.grow { flex: 1; }
.f1 { margin-left: 13px; } .f2 { margin-left: 11px; } .f3 { margin-left: 13px; } .f4 { margin-left: 13px; } .f5 { margin-left: 12px; }
.toggle { width: 9px; height: 17px; margin-left: 15px; border: 1px solid #2a2a2a; background: linear-gradient(#999, #707070 45%, #333 45%); }
.mode { width: 111px; margin-left: 4px; padding-left: 6px; }
.optext { width: 48px; margin-left: 5px; letter-spacing: -.25px; }
.pct { display: flex; width: 59px; height: 20px; border: 1px solid #2a2a2a; background: #3a3a3a; border-radius: 2px; letter-spacing: -.5px; }
.pv { width: 38px; line-height: 18px; padding-left: 4.500px; }
.pd { flex: 1; display: flex; justify-content: center; align-items: center; background: #666; }
.locktext { width: 42px; padding-left: 6px; margin-top: -4px; }
.k2 { margin-left: 8px; } .k3 { margin-left: 8px; } .k4 { margin-left: 11px; }
.filltext { width: 23px; margin-left: 26px; margin-top: -2px; }
.listwrap { flex: 1; display: flex; background: #454545; min-height: 0; }
.list { width: 385px; }
.layer { display: flex; height: 39px; border-bottom: 1px solid #333; background: #535353; color: #f0f0f0; }
.vis { width: 31px; border-right: 1px solid #3a3a3a; display: flex; align-items: center; padding-left: 8px; }
.body { flex: 1; display: flex; align-items: center; }
.lname { padding-top: 2px; letter-spacing: .07px; }
.selected { background: #596678; }
.th { margin: 0 10px 0 3px; } .tt { margin: 0 8px 0 1px; }
.group { height: 23px; }
.tri { margin-left: 5px; } .fold { margin: 0 13px 0 5px; }
.back { height: 40px; }
.white { width: 32px; height: 32px; margin: 0 11px 0 3px; border: 1px solid #000; background: #fff; }
.lk { margin-left: auto; margin-right: 17px; }
.lscroll { flex: 1; background: linear-gradient(90deg, #333, #434343); border-left: 1px solid #3a3a3a; }
.lfoot { height: 18px; flex: none; display: flex; align-items: center; padding: 1px 0 0 197px; border-top: 1px solid #696969; box-shadow: 0 -2px #333; }
.fx { display: flex; align-items: flex-end; width: 20px; margin-left: 14px; font: italic bold 13px/14px "Liberation Serif", serif; color: #bbb; }
.g1 { margin-left: 6px; } .g2 { margin-left: 14px; } .g3 { margin-left: 10px; } .g4 { margin-left: 15px; } .g5 { margin-left: 15px; }

/* taskbar */
.taskbar { height: 39px; flex: none; display: flex; background: #202020; border-top: 1px solid #282828; }
.tb { width: 46px; display: flex; align-items: center; justify-content: center; flex: none; }
.start { width: 44px; } .search { width: 46px; } .tview { width: 48px; padding-right: 3px; }
.run { background: linear-gradient(#b0b0b0, #b0b0b0) 50% 100% / 35px 3px no-repeat; }
.sticky { background: linear-gradient(#ff7300, #ff7300) 50% 100% / 45px 3px no-repeat, #a85e27; border-left: 1px solid #202020; padding-right: 1px; }
.ps { background: linear-gradient(#c4c4c4, #c4c4c4) 50% 100% / 45px 3px no-repeat, #4b4b4b; border-left: 1px solid #202020; padding-right: 2px; }
.pslogo { width: 18px; height: 17px; border: 1px solid #8fc4f5; background: #10095a; color: #a9d1ff; font: bold 10px/14px "Open Sans", sans-serif; text-align: center; margin-bottom: 3px; }
.tray { flex: 1; display: flex; align-items: center; justify-content: flex-end; color: #f2f2f2; font: 15px "Open Sans", sans-serif; }
.y2 { margin-left: 12px; } .y3 { margin-left: 10px; } .y4 { margin-left: 13px; } .y5 { margin-left: 10px; }
.lang { width: 49px; margin-left: 12px; letter-spacing: -.6px; }
.clock { width: 80px; letter-spacing: -.6px; }
.y6 { margin-right: 25px; }
.desk { width: 1px; height: 38px; background: #777; margin-right: 5px; }
```
